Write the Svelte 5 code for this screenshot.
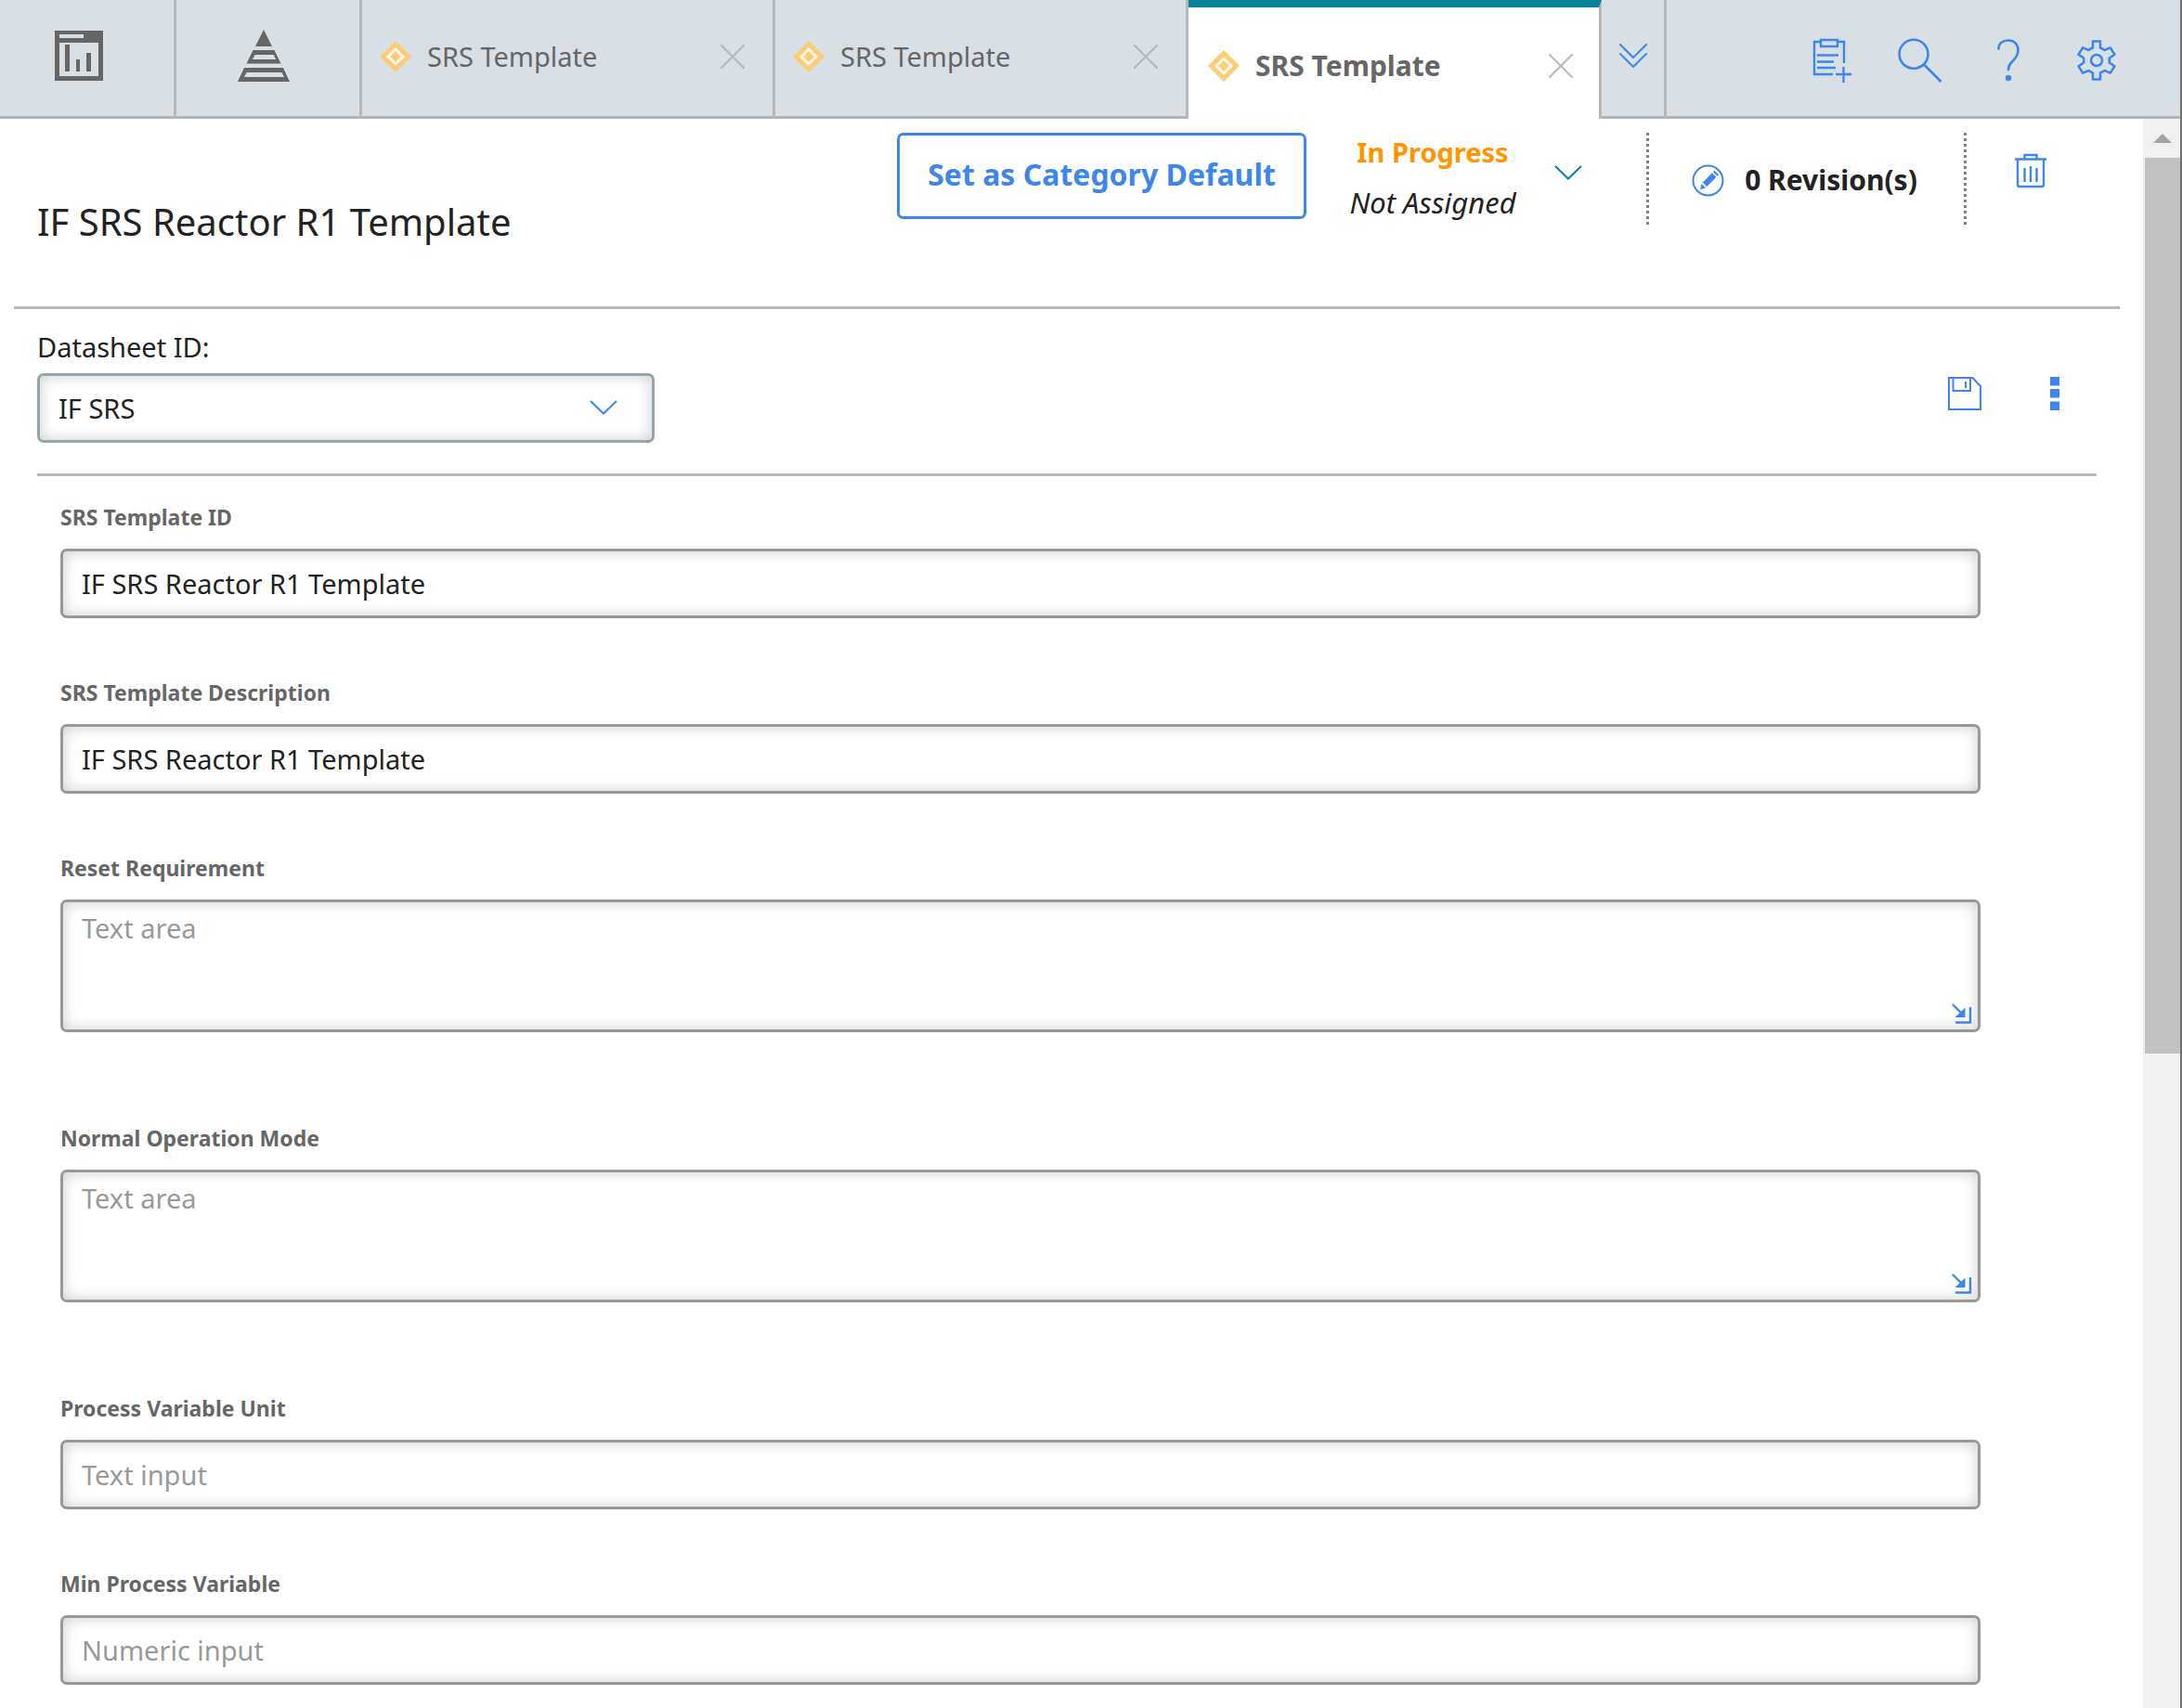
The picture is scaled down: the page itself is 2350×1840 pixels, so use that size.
<script>
  let tabs = $state([
    { id: 1, label: 'SRS Template' },
    { id: 2, label: 'SRS Template' },
    { id: 3, label: 'SRS Template' }
  ]);
  let activeTab = $state(3);
  let datasheet = $state('IF SRS');

  let fields = $state([
    { id: 'template-id', label: 'SRS Template ID', kind: 'text', value: 'IF SRS Reactor R1 Template', hint: 'Text input' },
    { id: 'template-description', label: 'SRS Template Description', kind: 'text', value: 'IF SRS Reactor R1 Template', hint: 'Text input' },
    { id: 'reset-requirement', label: 'Reset Requirement', kind: 'area', value: '', hint: 'Text area' },
    { id: 'normal-operation-mode', label: 'Normal Operation Mode', kind: 'area', value: '', hint: 'Text area' },
    { id: 'process-variable-unit', label: 'Process Variable Unit', kind: 'text', value: '', hint: 'Text input' },
    { id: 'min-process-variable', label: 'Min Process Variable', kind: 'text', value: '', hint: 'Numeric input' }
  ]);
</script>

<div class="app">
  <nav class="topbar" aria-label="Open pages">
    <button class="launcher dashboard" aria-label="Dashboard">
      <svg width="52" height="54" viewBox="0 0 52 54">
        <path fill="#666" fill-rule="evenodd" d="M0 0h52v54H0zM5 4v4h26V4zM5 13v36h42V13z" />
        <path fill="#666" d="M11 15h5v29h-5zM23 31h4v13h-4zM34 24h5v20h-5z" />
      </svg>
    </button>
    <button class="launcher hierarchy" aria-label="Hierarchy">
      <svg width="56" height="56" viewBox="0 0 56 56" fill="#666" fill-rule="evenodd">
        <path d="M28 0l9 18H19z" />
        <path d="M16.5 22h23l7 14.500h-37zM18.800 27l-3 5h25.200l-2.200-5z" />
        <path d="M7 41h42l7 15H0zM9.500 46l-2.500 5h43l-2.500-5z" />
      </svg>
    </button>

    {#each tabs as tab (tab.id)}
      <div class="tab" class:active={tab.id === activeTab}>
        <button class="tab-name" onclick={() => (activeTab = tab.id)}>
          <svg width="36" height="36" viewBox="0 0 36 36">
            <path fill="#ffcc75" d="M18 1l17 17-17 17L1 18z" />
            <path fill="#ffcc75" stroke="#fffaf0" stroke-width="3" d="M18 10l8 8-8 8-8-8z" />
          </svg>
          <span>{tab.label}</span>
        </button>
        <button class="tab-close" aria-label="Close tab">
          <svg width="26" height="26" viewBox="0 0 26 26" fill="none" stroke="#b8b7bb" stroke-width="2" stroke-linecap="round">
            <path d="M1 1l24 24M25 1L1 25" />
          </svg>
        </button>
      </div>
    {/each}

    <button class="more-tabs" aria-label="More tabs">
      <svg width="30" height="26" viewBox="0 0 30 26" fill="none" stroke="#3d87ea" stroke-width="2" stroke-linecap="round">
        <path d="M1 1l14 14L29 1M1 11l14 14 14-14" />
      </svg>
    </button>

    <div class="tools">
      <button aria-label="Add to list">
        <svg width="48" height="48" viewBox="0 0 48 48" fill="none" stroke="#3d87ea" stroke-width="2.400">
          <path d="M11 4H5v35h20M31 4h6v23" />
          <path d="M12 2h18v7H12z" />
          <path d="M8 18.500h23M8 25.500h18M8 32h20M36.500 31v17M28 39h17" />
        </svg>
      </button>
      <button aria-label="Search">
        <svg width="48" height="48" viewBox="0 0 48 48" fill="none" stroke="#3d87ea" stroke-width="2.600">
          <circle cx="17" cy="17.300" r="15.500" />
          <path d="M28 28.500l18.500 18.500" />
        </svg>
      </button>
      <button aria-label="Help">
        <svg width="48" height="48" viewBox="0 0 48 48" fill="none" stroke="#3d87ea" stroke-width="2.600">
          <path d="M13.500 11.500C13.500 5.500 18 2.500 24 2.500s10.500 4 10.500 10.500c0 5.500-2.500 8.500-5.500 11.500s-5 5-5 9.500" stroke-linecap="round" />
          <circle cx="24" cy="43" r="3.200" fill="#3d87ea" stroke="none" />
        </svg>
      </button>
      <button aria-label="Settings">
        <svg width="48" height="48" viewBox="0 0 48 48" fill="none" stroke="#3d87ea" stroke-width="2.600" stroke-linejoin="round">
          <path d="M20 3.500h8v7c1.600.6 3 1.400 4.500 2.500l6.300-2.600 4.700 7.300-5.700 3.800v5l5.700 3.800-4.700 7.300-6.300-2.600c-1.500 1.100-2.900 1.900-4.500 2.500v7h-8v-7c-1.600-.6-3-1.400-4.500-2.500l-6.300 2.600-4.700-7.300 5.700-3.800v-5l-5.700-3.800 4.700-7.300 6.300 2.600c1.500-1.100 2.900-1.900 4.500-2.500z" />
          <circle cx="24" cy="24" r="6" />
        </svg>
      </button>
    </div>
  </nav>

  <div class="body">
    <main>
      <header class="heading">
        <h1>IF SRS Reactor R1 Template</h1>
        <button class="default-btn">Set as Category Default</button>
        <div class="status">
          <strong>In Progress</strong>
          <em>Not Assigned</em>
        </div>
        <button class="status-toggle" aria-label="Change status">
          <svg width="30" height="16" viewBox="0 0 30 16" fill="none" stroke="#0a829b" stroke-width="2">
            <path d="M1 1l14 13.500L29 1" />
          </svg>
        </button>
        <button class="revisions">
          <svg width="35" height="35" viewBox="0 0 35 35">
            <circle cx="17.500" cy="17.500" r="16" fill="none" stroke="#3d87ea" stroke-width="2" />
            <path fill="#3d87ea" d="M9 27l1.500-6 4.500 4.500zM11.800 19.500L22 9.300l4.500 4.500L16.200 24zM23 8.300l1.500-1.500 4.500 4.500-1.500 1.500z" />
          </svg>
          <span>0 Revision(s)</span>
        </button>
        <button class="trash" aria-label="Delete">
          <svg width="34" height="38" viewBox="0 0 34 38" fill="none" stroke="#3d87ea" stroke-width="2.400">
            <path d="M0 6.500h34M10.500 6.500V2h13v4.500M3 7v27q0 2 2 2h24q2 0 2-2V7" />
            <path d="M10.500 16v15M17 14v17M23.500 16v15" />
          </svg>
        </button>
      </header>

      <section class="sheet">
        <div class="sheet-bar">
          <div class="picker">
            <label for="datasheet">Datasheet ID:</label>
            <div class="select-wrap">
              <select id="datasheet" bind:value={datasheet}>
                <option>IF SRS</option>
              </select>
              <svg class="select-mark" width="30" height="16" viewBox="0 0 30 16" fill="none" stroke="#3d87ea" stroke-width="2">
                <path d="M1 1l14 13.500L29 1" />
              </svg>
            </div>
          </div>
          <div class="sheet-tools">
            <button aria-label="Save">
              <svg width="36" height="36" viewBox="0 0 36 36" fill="none" stroke="#3d87ea" stroke-width="2">
                <path d="M1 1h25.500l8.500 9v25H1z" />
                <path d="M5.500 1v14H24V1M19 5v7" />
              </svg>
            </button>
            <button aria-label="More actions">
              <svg width="10" height="36" viewBox="0 0 10 36" fill="#3d87ea">
                <path d="M0 0h10v9.500H0zM0 13h10v9.500H0zM0 26.500h10V36H0z" />
              </svg>
            </button>
          </div>
        </div>

        <form class="fields">
          {#each fields as field (field.id)}
            <div class="field" class:tall={field.kind === 'area'}>
              <label for={field.id}>{field.label}</label>
              {#if field.kind === 'area'}
                <div class="area-wrap">
                  <textarea id={field.id} placeholder={field.hint} bind:value={field.value}></textarea>
                  <svg class="grip" width="22" height="22" viewBox="0 0 22 22" fill="none" stroke="#3d87ea" stroke-width="2.400" stroke-linecap="round">
                    <path d="M1.500 1.500l9 9M20 5v15.500H5" />
                    <path d="M14.500 4.500V15H3.500z" fill="#3d87ea" stroke="none" />
                  </svg>
                </div>
              {:else}
                <input id={field.id} type="text" placeholder={field.hint} bind:value={field.value} />
              {/if}
            </div>
          {/each}
        </form>
      </section>
    </main>

    <div class="scrollbar" aria-hidden="true">
      <div class="scroll-up">
        <svg width="20" height="10" viewBox="0 0 20 10"><path fill="#a3a3a3" d="M10 0l10 10H0z" /></svg>
      </div>
      <div class="thumb"></div>
      <div class="rest"></div>
    </div>
  </div>
</div>

<style>
  :global(body) {
    margin: 0;
    background: #fff;
  }

  .app {
    box-sizing: border-box;
    display: flex;
    flex-direction: column;
    min-height: 100vh;
    border-right: 2px solid #707070;
    color: #222;
    font: 29px/40px 'Noto Sans', sans-serif;
  }

  .app * {
    box-sizing: border-box;
  }

  button {
    display: flex;
    align-items: center;
    justify-content: center;
    padding: 0;
    border: 0;
    background: none;
    color: inherit;
    font: inherit;
    white-space: nowrap;
    cursor: pointer;
  }

  svg {
    display: block;
    flex: none;
  }

  .topbar {
    display: flex;
    height: 128px;
    background: #d8dfe5;
    color: #666;
  }

  .topbar > * {
    border-bottom: 3px solid #b4b3b8;
  }

  .launcher,
  .tab,
  .more-tabs {
    border-right: 3px solid #b8b8b8;
  }

  .dashboard {
    width: 190px;
    padding: 0 17px 6px 0;
  }

  .hierarchy {
    width: 200px;
    padding: 0 9px 5px 0;
  }

  .tab {
    display: flex;
    align-items: center;
    justify-content: space-between;
    width: 445px;
    padding: 0 30px 3px 18px;
  }

  .tab-name {
    gap: 16px;
  }

  .tab.active {
    padding: 5px 28px 0 20px;
    border-top: 8px solid #0a829b;
    border-bottom: 0;
    background: #fff;
    font-size: 30px;
    font-weight: 700;
  }

  .more-tabs {
    width: 70px;
    padding-bottom: 5px;
  }

  .tools {
    display: flex;
    flex: 1;
    align-items: flex-start;
    justify-content: flex-end;
    gap: 47px;
    padding: 41px 66px 0 0;
  }

  .body {
    display: flex;
    flex: 1;
  }

  main {
    flex: 1;
    padding: 0 25px 26px 15px;
  }

  .heading {
    display: flex;
    align-items: flex-start;
    height: 205px;
    padding-top: 15px;
    border-bottom: 3px solid #b8b8bd;
  }

  h1 {
    flex: 1;
    margin: 0;
    padding: 68px 0 0 25px;
    font-size: 40px;
    line-height: 56px;
    font-weight: 400;
  }

  .default-btn {
    width: 441px;
    height: 93px;
    padding-bottom: 4px;
    border: 3px solid #3d87ea;
    border-radius: 7px;
    color: #3d87ea;
    font-size: 32px;
    font-weight: 700;
  }

  .status {
    display: flex;
    flex-direction: column;
    align-items: center;
    gap: 14px;
    width: 188px;
    margin-left: 42px;
    padding-top: 1px;
  }

  .status strong {
    color: #ff9500;
  }

  .status em {
    font-size: 31px;
  }

  .status-toggle {
    width: 104px;
    height: 85px;
  }

  .revisions {
    gap: 22px;
    width: 345px;
    height: 100px;
    margin-left: 32px;
    padding: 2px 4px 0 0;
    background:
      repeating-linear-gradient(#808080 0 3px, transparent 3px 6px) left / 3px 100% no-repeat,
      repeating-linear-gradient(#808080 0 3px, transparent 3px 6px) right / 3px 100% no-repeat;
    font-size: 30px;
    font-weight: 700;
  }

  .trash {
    width: 34px;
    height: 82px;
    margin: 0 79px 0 52px;
  }

  .sheet {
    padding: 0 25px;
  }

  .sheet-bar {
    display: flex;
    align-items: flex-start;
    justify-content: space-between;
    height: 180px;
    border-bottom: 3px solid #b8b8bd;
  }

  .picker {
    display: flex;
    flex-direction: column;
    gap: 8px;
    width: 30%;
    padding-top: 21px;
  }

  .select-wrap,
  .area-wrap {
    position: relative;
  }

  select,
  input,
  textarea {
    display: block;
    width: 100%;
    height: 75px;
    margin: 0;
    padding: 0 20px;
    border: 3px solid #989898;
    border-radius: 7px;
    outline: 0;
    background: #fff;
    box-shadow: inset 0 0 16px rgba(0, 0, 0, 0.2);
    color: #222;
    font: inherit;
  }

  select {
    appearance: none;
    border-color: #93a5af;
  }

  .select-mark {
    position: absolute;
    top: 29px;
    right: 40px;
    pointer-events: none;
  }

  textarea {
    height: 143px;
    padding-top: 8px;
    resize: none;
  }

  .grip {
    position: absolute;
    right: 9px;
    bottom: 9px;
    pointer-events: none;
  }

  ::placeholder {
    color: #999;
    opacity: 1;
  }

  .sheet-tools {
    display: flex;
    gap: 74px;
    padding: 73px 40px 0 0;
  }

  .fields {
    display: flex;
    flex-direction: column;
    padding: 28px 125px 0 25px;
  }

  .field {
    margin-bottom: 64px;
  }

  .field.tall {
    margin-bottom: 98px;
  }

  .field:last-child {
    margin-bottom: 0;
  }

  .field label {
    display: block;
    width: max-content;
    margin-bottom: 18px;
    color: #666;
    font-size: 23px;
    line-height: 32px;
    font-weight: 700;
  }

  .scrollbar {
    display: flex;
    flex-direction: column;
    width: 40px;
    padding-left: 2px;
    background: #f0f0f0;
  }

  .scroll-up {
    display: flex;
    align-items: center;
    justify-content: center;
    height: 42px;
  }

  .thumb {
    flex: 964;
    background: #c1c1c1;
  }

  .rest {
    flex: 706;
  }
</style>
